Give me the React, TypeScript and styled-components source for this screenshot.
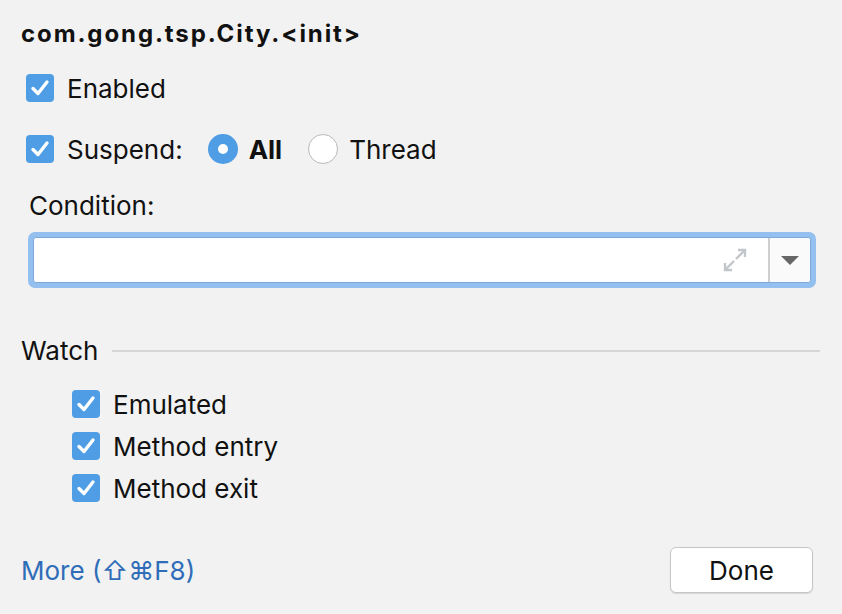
import React from "react";
import styled, { createGlobalStyle } from "styled-components";

const Global = createGlobalStyle`
  html, body { margin: 0; padding: 0; background: #f2f2f2; }
  body { font-family: Inter, "Noto Sans", "Liberation Sans", sans-serif; color: #111; }
  * { box-sizing: border-box; }
`;

const Dialog = styled.div`
  width: 842px;
  height: 614px;
  background: #f2f2f2;
  padding: 17px 22px 0 21px;
  display: flex;
  flex-direction: column;
`;

const Title = styled.div`
  font-size: 24px;
  font-weight: 700;
  line-height: 34px;
  color: #111;
  letter-spacing: 1.9px;
`;

const Row = styled.label<{ $indent?: number; $mt?: number }>`
  display: flex;
  align-items: center;
  height: 28px;
  margin-left: ${(p) => p.$indent ?? 0}px;
  margin-top: ${(p) => p.$mt ?? 0}px;
  font-size: 26px;
  color: #111;
`;

const Box = styled.span`
  width: 28px;
  height: 28px;
  border-radius: 4px;
  background: #4e9de5;
  display: inline-flex;
  align-items: center;
  justify-content: center;
  flex: none;
  margin-right: 13px;
`;

const Radio = styled.span<{ $on?: boolean }>`
  width: 30px;
  height: 30px;
  border-radius: 50%;
  flex: none;
  display: inline-flex;
  align-items: center;
  justify-content: center;
  background: ${(p) => (p.$on ? "#4e9de5" : "#ffffff")};
  border: ${(p) => (p.$on ? "none" : "1.5px solid #b9b9b9")};
  margin-left: ${(p) => (p.$on ? 25 : 26)}px;
  margin-right: 11px;
  &::after {
    content: "";
    display: ${(p) => (p.$on ? "block" : "none")};
    width: 10px;
    height: 10px;
    border-radius: 50%;
    background: #fff;
  }
`;

const Strong = styled.span`
  font-weight: 700;
`;

const Label = styled.div`
  font-size: 26px;
  margin-top: 27px;
  margin-left: 8px;
  line-height: 32px;
  color: #111;
`;

const Combo = styled.div`
  margin-top: 10px;
  margin-left: 7px;
  width: 788px;
  height: 56px;
  border-radius: 7px;
  background: #94c0f0;
  padding: 5px;
`;

const ComboInner = styled.div`
  width: 100%;
  height: 100%;
  background: #ffffff;
  border-radius: 3px;
  border: 1px solid #7ea9d9;
  display: flex;
  align-items: stretch;
`;

const Field = styled.div`
  flex: 1;
  display: flex;
  align-items: center;
  justify-content: flex-end;
  padding-right: 20px;
`;

const ArrowBtn = styled.div`
  width: 42px;
  border-left: 2px solid #cfcfcf;
  background: #fafafa;
  display: flex;
  align-items: center;
  justify-content: center;
  border-radius: 0 3px 3px 0;
`;

const Section = styled.div`
  display: flex;
  align-items: center;
  margin-top: 47px;
  font-size: 26px;
  line-height: 32px;
  color: #111;
`;

const Rule = styled.div`
  flex: 1;
  height: 2px;
  background: #d6d6d6;
  margin-left: 14px;
`;

const WatchList = styled.div`
  display: flex;
  flex-direction: column;
  gap: 14px;
  margin-top: 23px;
`;

const Footer = styled.div`
  margin-top: auto;
  margin-bottom: 21px;
  display: flex;
  align-items: center;
  justify-content: space-between;
`;

const MoreLink = styled.a`
  color: #2f6db8;
  font-size: 26px;
  text-decoration: none;
  cursor: pointer;
`;

const Button = styled.button`
  width: 143px;
  height: 46px;
  background: #ffffff;
  border: 1.5px solid #c6c6c6;
  border-radius: 6px;
  box-shadow: 0 1px 1px rgba(0, 0, 0, 0.12);
  font-family: inherit;
  font-size: 26px;
  color: #111;
  margin-right: 7px;
`;

const Check = () => (
  <svg width="22" height="22" viewBox="0 0 22 22">
    <path d="M4 11.5 L9 16.5 L18 5" fill="none" stroke="#fff" strokeWidth="3.4" strokeLinecap="round" strokeLinejoin="round" />
  </svg>
);

const CheckRow: React.FC<{ label: string; indent?: number; mt?: number; children?: React.ReactNode }> = ({ label, indent, mt, children }) => (
  <Row $indent={indent} $mt={mt}>
    <Box>
      <Check />
    </Box>
    {label}
    {children}
  </Row>
);

const ExpandIcon = () => (
  <svg width="26" height="26" viewBox="0 0 26 26" fill="none" stroke="#c2c6ca" strokeWidth="2.4">
    <path d="M14 12 L23 3" />
    <path d="M16 3 L23 3 L23 10" />
    <path d="M12 14 L3 23" />
    <path d="M3 16 L3 23 L10 23" />
  </svg>
);

const DropArrow = () => (
  <svg width="18" height="9" viewBox="0 0 18 9">
    <path d="M0 0 L18 0 L9 9 Z" fill="#666" />
  </svg>
);

export default function App() {
  return (
    <>
      <Global />
      <Dialog>
        <Title>com.gong.tsp.City.&lt;init&gt;</Title>
        <CheckRow label="Enabled" indent={5} mt={23} />
        <CheckRow label="Suspend:" indent={5} mt={33}>
          <Radio $on />
          <Strong>All</Strong>
          <Radio />
          Thread
        </CheckRow>
        <Label>Condition:</Label>
        <Combo>
          <ComboInner>
            <Field>
              <ExpandIcon />
            </Field>
            <ArrowBtn>
              <DropArrow />
            </ArrowBtn>
          </ComboInner>
        </Combo>
        <Section>
          Watch
          <Rule />
        </Section>
        <WatchList>
          <CheckRow label="Emulated" indent={51} />
          <CheckRow label="Method entry" indent={51} />
          <CheckRow label="Method exit" indent={51} />
        </WatchList>
        <Footer>
          <MoreLink>More (⇧⌘F8)</MoreLink>
          <Button>Done</Button>
        </Footer>
      </Dialog>
    </>
  );
}
